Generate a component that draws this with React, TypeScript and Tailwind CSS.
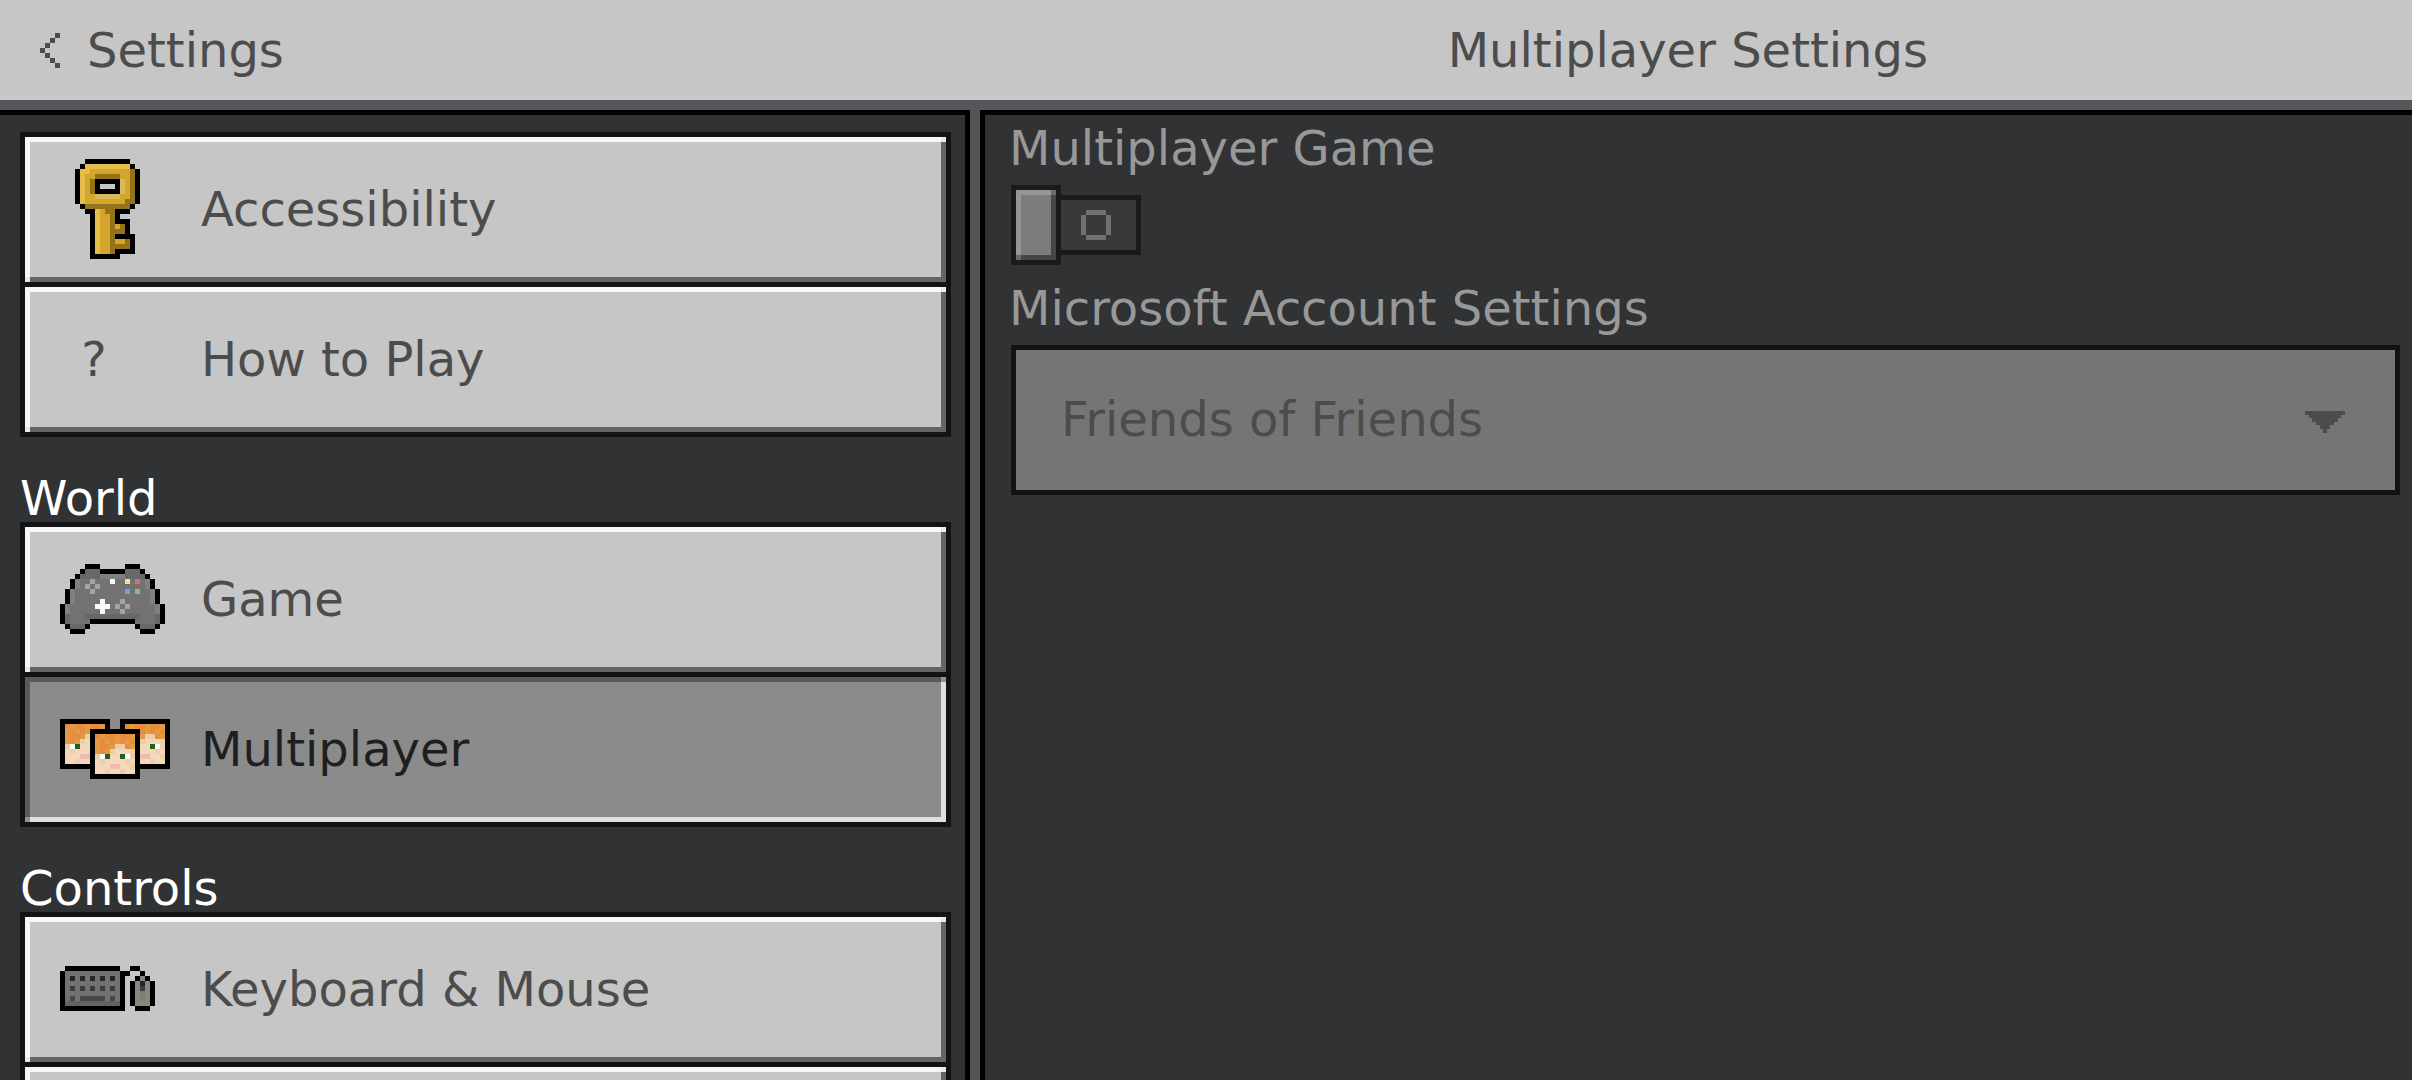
import React, {useState} from 'react';

type PixelsProps = {
    rows: string[]
    palette: Record<string, string>
    x?: number
    y?: number
}

// one character of a row is one square, a dot is left empty
const Pixels = ({rows, palette, x = 0, y = 0}: PixelsProps) => (
    <g>
        {rows.map((row, j) => row.split('').map((cell, i) => (
            cell === '.' ? null :
                <rect key={i + '-' + j} x={x + i} y={y + j} width={1} height={1} fill={palette[cell]}/>
        )))}
    </g>
)

const KEY = [
    '..kkkkkkkkk..',
    '.klllllllllk.',
    'kllggggggggdk',
    'klggdddddggdk',
    'klgdkkkkkpgdk',
    'klgdk...kpgdk',
    'klgdkkkkkpgdk',
    'klggpppppggdk',
    'klggggggggddk',
    '.kdddddddddk.',
    '..kklgddkkk..',
    '...klggdk....',
    '...klggdkkk..',
    '...klggdgdk..',
    '...klggdddk..',
    '...klggdkkkk.',
    '...klggdggdk.',
    '...klggddddk.',
    '...klggdkkkk.',
    '...kkkkkk....',
]

const GAMEPAD = [
    '.....kkk.....kkk.....',
    '....keeekkkkkeeek....',
    '...keeeehhhhheeeek...',
    '..khffmfffwffyfrfhk..',
    '..khfmfmfffffffffhk..',
    '.khfffmffffffufnffhk.',
    '.khfffffffffffffffhk.',
    '.khfffffwfffmfffffhk.',
    'khfffffwwwfmfmfffffhk',
    'khffffffwfffmffffffhk',
    'kefffeeeeeeeeeeefffek',
    'keffffkkkkkkkkkffffek',
    '.keeek.........keeek.',
    '..kkk...........kkk..',
]

const FACE = [
    'abaabaab',
    'babababa',
    'baabttab',
    'babtssst',
    'twgssgwt',
    'stssssts',
    'sssppsst',
    'sstsstss',
]

const KEYBOARD = [
    '.kkkkkkkkkkk..kk...',
    'kfffffffffffkk..k..',
    'kf1f1f1f1f1fk..kmk.',
    'kfffffffffffk.km1mk',
    'kf2f2f2f2f2fk.km2mk',
    'kfffffffffffk.kmnmk',
    'kf3f33333f3fk.kmnmk',
    'kgggggggggggk.kmmmk',
    'kkkkkkkkkkkkk..kkk.',
]

const CHEVRON = ['...k', '..k.', '.k..', 'k...', '.k..', '..k.', '...k']

const RING = ['.kkkk.', 'k....k', 'k....k', 'k....k', 'k....k', '.kkkk.']

const KeyIcon = () => (
    <svg viewBox="-3 0 22 20" className="w-[110px]" shapeRendering="crispEdges">
        <Pixels rows={KEY} palette={{k: '#000000', l: '#e6bc4b', g: '#d4a62c', d: '#957419', p: '#dab759'}}/>
    </svg>
)

const GamepadIcon = () => (
    <svg viewBox="0 0 22 14" className="w-[110px]" shapeRendering="crispEdges">
        <Pixels rows={GAMEPAD} palette={{
            k: '#000000', e: '#686868', f: '#727272', h: '#808080', m: '#a3a4a6',
            w: '#fafafa', y: '#f2e68c', r: '#e3677b', u: '#5fabdc', n: '#93b584',
        }}/>
    </svg>
)

const FacesIcon = () => {
    const palette = {
        a: '#e78e3c', b: '#e39a45', s: '#f3d9ba', t: '#ecceab', w: '#ffffff', g: '#25601f', p: '#efbcb0',
    }
    return (
        <svg viewBox="0 0 22 12" className="w-[110px]" shapeRendering="crispEdges">
            {[[0, 0], [12, 0], [6, 2]].map(([x, y]) => (
                <g key={x}>
                    <rect x={x} y={y} width={10} height={10} fill="#000000"/>
                    <Pixels rows={FACE} palette={palette} x={x + 1} y={y + 1}/>
                </g>
            ))}
        </svg>
    )
}

const KeyboardIcon = () => (
    <svg viewBox="0 0 22 9" className="w-[110px]" shapeRendering="crispEdges">
        <Pixels rows={KEYBOARD} palette={{
            k: '#000000', f: '#727272', g: '#636363', '1': '#262626', '2': '#3c3c3c', '3': '#484848',
            m: '#87867f', n: '#7f7d77',
        }}/>
    </svg>
)

const QuestionIcon = () => <span className="block w-[68px] text-center">?</span>

type ItemType = {
    id: string
    label?: string
    icon?: React.ReactNode
}

type SectionType = {
    title?: string
    items: ItemType[]
}

const sections: SectionType[] = [
    {
        items: [
            {id: 'accessibility', label: 'Accessibility', icon: <KeyIcon/>},
            {id: 'howto', label: 'How to Play', icon: <QuestionIcon/>},
        ],
    },
    {
        title: 'World',
        items: [
            {id: 'game', label: 'Game', icon: <GamepadIcon/>},
            {id: 'multiplayer', label: 'Multiplayer', icon: <FacesIcon/>},
        ],
    },
    {
        title: 'Controls',
        items: [
            {id: 'keyboard', label: 'Keyboard & Mouse', icon: <KeyboardIcon/>},
            {id: 'controller'},
        ],
    },
]

type MenuItemProps = {
    item: ItemType
    active: boolean
    onSelect: () => void
}

const MenuItem = ({item, active, onSelect}: MenuItemProps) => (
    <button
        type="button"
        onClick={onSelect}
        aria-label={item.label ?? item.id}
        aria-current={active ? 'page' : undefined}
        className={active
            ? "flex h-[145px] w-full items-center bg-[#8b8b8b] pb-[2px] pl-[35px] text-left text-[#1f1f1f] shadow-[inset_5px_5px_0_rgba(0,0,0,0.35),inset_-5px_-5px_0_#e0e0e0]"
            : "flex h-[145px] w-full items-center bg-[#c6c6c6] pb-[2px] pl-[35px] text-left text-[#4c4c4c] shadow-[inset_5px_5px_0_rgba(255,255,255,0.86),inset_-5px_-5px_0_#656565]"}
    >
        <span className="w-[141px] shrink-0">{item.icon}</span>
        <span>{item.label}</span>
    </button>
)

export default function App() {

    const [selected, setSelected] = useState<string>('multiplayer')
    const [enabled, setEnabled] = useState<boolean>(false)
    const [access, setAccess] = useState<string>('friends-of-friends')

    return (
        <div className="flex h-screen flex-col overflow-hidden bg-[#545456] font-['DejaVu_Sans',sans-serif] text-5xl leading-[48px]">
            <header className="grid shrink-0 grid-cols-[21fr_32fr] border-b-10 border-[#58565a] bg-[#c6c6c6] py-[26px] text-[#4c4c4c] shadow-[inset_0_-5px_0_#c8c9cb]">
                <button type="button" className="flex items-center gap-[27px] justify-self-start pl-10">
                    <svg viewBox="0 0 4 7" className="w-5" shapeRendering="crispEdges">
                        <Pixels rows={CHEVRON} palette={{k: '#4c4c4c'}}/>
                    </svg>
                    Settings
                </button>
                <h1 className="pl-2 text-center">Multiplayer Settings</h1>
            </header>

            <div className="grid min-h-0 flex-1 grid-cols-[21fr_31fr] gap-[10px]">
                <nav className="flex flex-col gap-[37px] overflow-hidden border-t-5 border-r-5 border-black bg-[#313233] pt-[17px] pr-[14px] pl-5">
                    {sections.map((section, i) => (
                        <section key={i}>
                            {section.title && <h2 className="text-white">{section.title}</h2>}
                            <div className="flex flex-col gap-[5px] bg-[#131313] p-[5px]">
                                {section.items.map(item => (
                                    <MenuItem
                                        key={item.id}
                                        item={item}
                                        active={item.id === selected}
                                        onSelect={() => setSelected(item.id)}
                                    />
                                ))}
                            </div>
                        </section>
                    ))}
                </nav>

                <main className="overflow-hidden border-t-5 border-l-5 border-black bg-[#313233] pt-[9px] pr-3 pl-6 text-[#989898]">
                    <label htmlFor="multiplayer-game" className="block">Multiplayer Game</label>
                    <label className="relative mt-[13px] ml-0.5 flex w-fit items-center">
                        <input
                            id="multiplayer-game"
                            type="checkbox"
                            role="switch"
                            disabled
                            checked={enabled}
                            onChange={e => setEnabled(e.target.checked)}
                            className="sr-only"
                        />
                        <span className="h-20 w-[50px] border-5 border-[#191b1a]">
                            <span className="block h-full bg-[#7c7c7c] shadow-[inset_5px_5px_0_rgba(255,255,255,0.2),inset_-5px_-5px_0_#464647]"/>
                        </span>
                        <span className="flex h-[60px] w-20 items-center border-5 border-l-0 border-[#191b1a] bg-[#393939] pl-5">
                            <svg viewBox="0 0 6 6" className="w-[30px]" shapeRendering="crispEdges">
                                <Pixels rows={RING} palette={{k: '#707170'}}/>
                            </svg>
                        </span>
                    </label>

                    <label htmlFor="account-settings" className="mt-[19px] block">Microsoft Account Settings</label>
                    <div className="relative mt-[13px] ml-0.5">
                        <select
                            id="account-settings"
                            disabled
                            value={access}
                            onChange={e => setAccess(e.target.value)}
                            className="block h-[150px] w-full appearance-none border-5 border-[#131313] bg-[#757575] pb-[3px] pl-[45px] text-[#4c4c4c] opacity-100"
                        >
                            <option value="friends-of-friends">Friends of Friends</option>
                        </select>
                        <svg
                            viewBox="0 0 40 22"
                            className="pointer-events-none absolute top-[66px] right-[55px] w-10"
                            shapeRendering="crispEdges"
                        >
                            <path d="M0 0H40V4H36V7H33V11H29V14H25V18H22V22H18V18H15V14H11V11H7V7H4V4H0Z" fill="#4c4c4c"/>
                        </svg>
                    </div>
                </main>
            </div>
        </div>
    )
}
